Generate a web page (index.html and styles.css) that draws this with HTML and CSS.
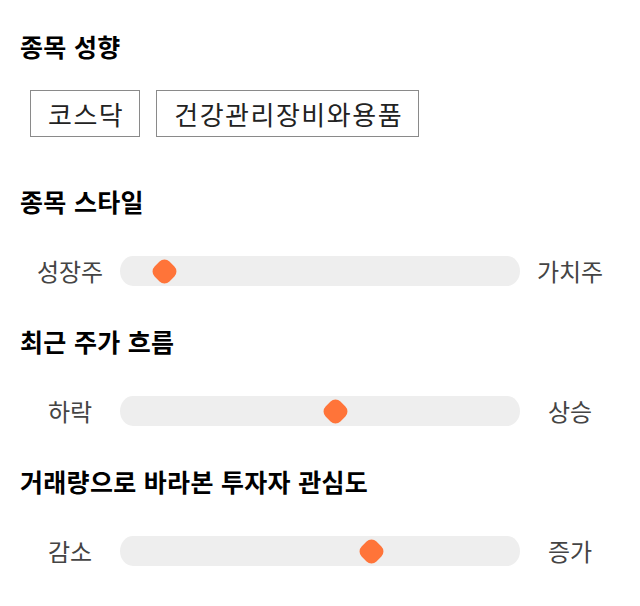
FILE: index.html
```html
<!DOCTYPE html>
<html lang="ko">
<head>
<meta charset="utf-8">
<link rel="stylesheet" href="styles.css">
</head>
<body>
  <section class="group">
    <h2 class="title">종목 성향</h2>
    <div class="tags">
      <span class="tag">코스닥</span>
      <span class="tag">건강관리장비와용품</span>
    </div>
  </section>
  <section class="group">
    <h2 class="title">종목 스타일</h2>
    <div class="slider">
      <span class="label">성장주</span>
      <div class="track"><span class="thumb" style="left: calc(11% - 14px)"></span></div>
      <span class="label">가치주</span>
    </div>
  </section>
  <section class="group">
    <h2 class="title">최근 주가 흐름</h2>
    <div class="slider">
      <span class="label">하락</span>
      <div class="track"><span class="thumb" style="left: calc(53.8% - 14px)"></span></div>
      <span class="label">상승</span>
    </div>
  </section>
  <section class="group">
    <h2 class="title">거래량으로 바라본 투자자 관심도</h2>
    <div class="slider">
      <span class="label">감소</span>
      <div class="track"><span class="thumb" style="left: calc(62.8% - 14px)"></span></div>
      <span class="label">증가</span>
    </div>
  </section>
</body>
</html>
```
FILE: styles.css
```css
html, body {
  margin: 0;
  background: #ffffff;
}
body {
  padding: 31px 20px 0 20px;
  font-family: "Noto Sans CJK KR", "Noto Sans", sans-serif;
  color: #111111;
}
.group + .group {
  margin-top: 49px;
}
.group + .group + .group {
  margin-top: 40px;
}
.title {
  margin: 0;
  font-size: 25px;
  line-height: 30px;
  font-weight: 700;
  letter-spacing: 0.3px;
  color: #000000;
}
.tags {
  display: flex;
  gap: 16px;
  margin-top: 29px;
  padding-left: 10px;
}
.tag {
  border: 1px solid #8a8a8a;
  padding: 8px 15px 8px 17px;
  font-size: 26px;
  line-height: 29px;
  letter-spacing: 1.5px;
  color: #222222;
}
.slider {
  display: flex;
  align-items: center;
  margin-top: 40px;
  height: 30px;
}
.label {
  width: 100px;
  flex: none;
  text-align: center;
  font-size: 24px;
  line-height: 30px;
  color: #444444;
}
.track {
  position: relative;
  flex: 1;
  height: 30px;
  background: #eeeeee;
  border-radius: 13px / 15px;
}
.thumb {
  position: absolute;
  top: 1px;
  width: 28px;
  height: 28px;
  display: flex;
  align-items: center;
  justify-content: center;
}
.thumb::before {
  content: "";
  width: 21px;
  height: 21px;
  background: #ff7439;
  border-radius: 7px;
  transform: rotate(45deg);
}
```
